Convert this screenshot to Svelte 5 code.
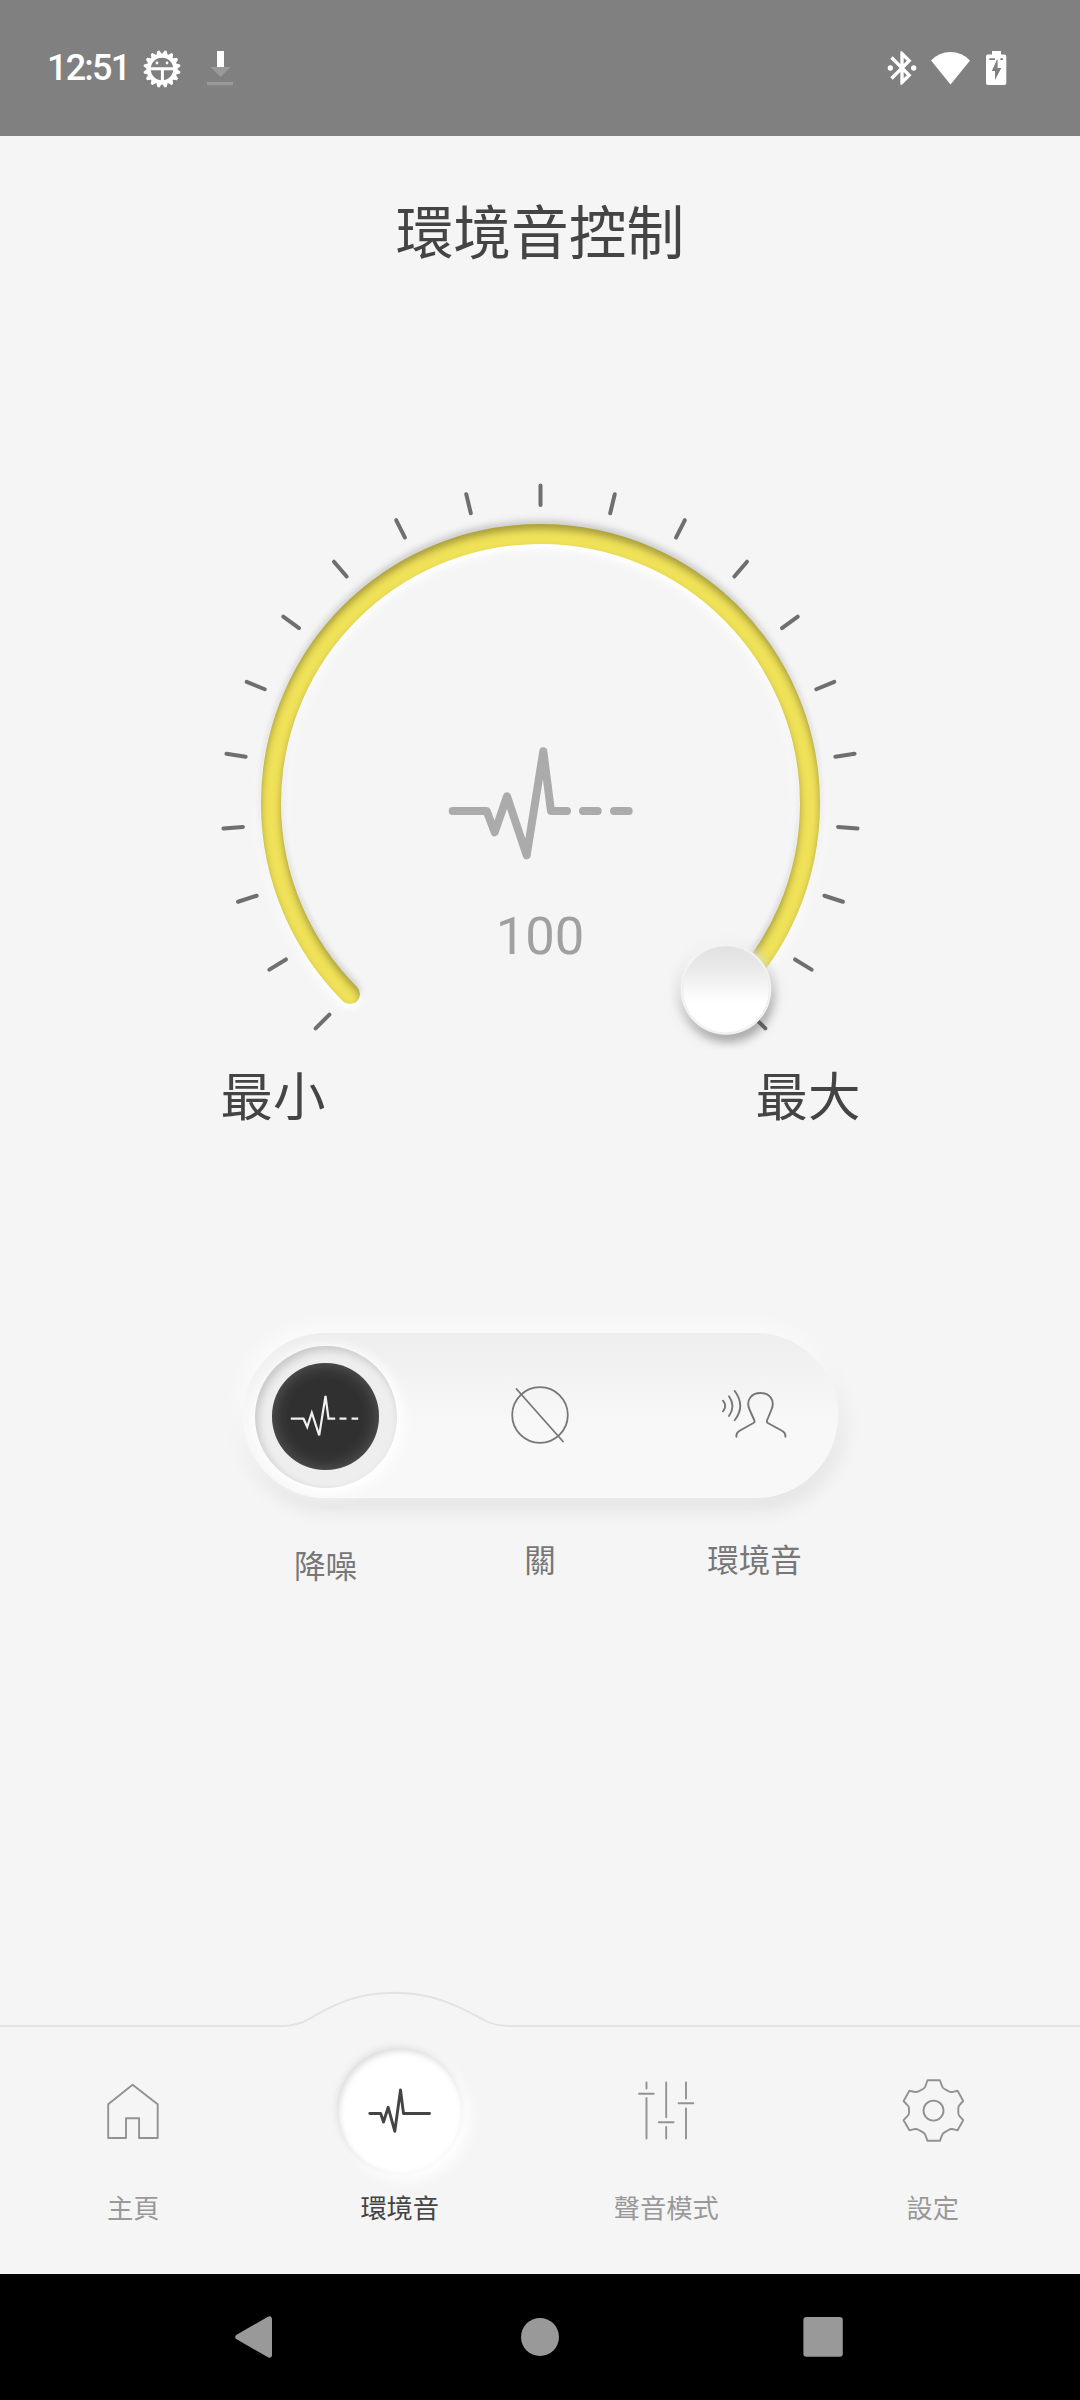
<script lang="ts">
	type Mode = 'nc' | 'off' | 'ambient';

	let level = $state(100);
	let mode = $state<Mode>('nc');
	let activeTab = $state('ambient');

	// Dial geometry
	const cx = 360.5;
	const cy = 353.5;
	const radius = 269.5;
	const knobRadius = 263;
	const sweep = 270;
	const tickCount = 21;

	const ticks = Array.from({ length: tickCount }, (_, i) => -sweep / 2 + (i * sweep) / (tickCount - 1));

	// 0 degrees points up, positive is clockwise
	function polar(angle: number, r: number) {
		const rad = (angle * Math.PI) / 180;
		return { x: cx + r * Math.sin(rad), y: cy - r * Math.cos(rad) };
	}

	let angle = $derived(-sweep / 2 + (level / 100) * sweep);
	let knob = $derived(polar(angle, knobRadius));
	let arc = $derived.by(() => {
		const from = polar(-sweep / 2, radius);
		const to = polar(angle, radius);
		const large = angle + sweep / 2 > 180 ? 1 : 0;
		return `M${from.x} ${from.y}A${radius} ${radius} 0 ${large} 1 ${to.x} ${to.y}`;
	});

	const modes: { id: Mode; label: string }[] = [
		{ id: 'nc', label: '降噪' },
		{ id: 'off', label: '關' },
		{ id: 'ambient', label: '環境音' }
	];

	const tabs = [
		{ id: 'home', label: '主頁' },
		{ id: 'ambient', label: '環境音' },
		{ id: 'sound', label: '聲音模式' },
		{ id: 'settings', label: '設定' }
	];

	const teeth = Array.from({ length: 16 }, (_, i) => (i * 360) / 16);
</script>

<div class="screen">
	<div class="status">
		<span class="clock">12:51</span>
		<svg class="bug" width="40" height="40" viewBox="-20 -20 40 40">
			{#each teeth as t}
				<path d="M-3.2 -14L-1 -18.6H1L3.2 -14Z" fill="#fff" transform="rotate({t + 11.25})" />
			{/each}
			<circle r="13.3" fill="none" stroke="#fff" stroke-width="4" />
			<path d="M-12 -0.3H12M0.4 0V12" stroke="#fff" stroke-width="3" />
			<circle cx="-5" cy="-6" r="1.4" fill="#fff" />
			<circle cx="5" cy="-6" r="1.4" fill="#fff" />
		</svg>
		<svg class="download" width="26" height="36" viewBox="0 0 26 36">
			<path d="M3.5 17H23.5L13.5 27ZM0 32H26V35.3H0Z" fill="#999" />
			<path d="M10 1H17V17H10Z" fill="#fff" />
		</svg>
		<svg class="bt" width="40" height="40" viewBox="0 0 24 24" fill="#fff">
			<path
				d="M17.71 7.71L12 2h-1v7.59L6.41 5 5 6.41 10.59 12 5 17.59 6.41 19 11 14.41V22h1l5.71-5.71-4.3-4.29zM13 5.83l1.88 1.88L13 9.59zM14.88 16.29L13 18.17v-3.76z"
			/>
			<circle cx="5" cy="12" r="1.6" />
			<circle cx="19" cy="12" r="1.6" />
		</svg>
		<svg class="wifi" width="40" height="34" viewBox="0 0 40 34">
			<path d="M0 9.6Q8 1 19.5 1T39 9.6L19.5 33.5Z" fill="#fff" />
		</svg>
		<svg class="battery" width="21" height="34" viewBox="0 0 21 34">
			<path d="M6 0H15V3.6H18.3A2 2 0 0 1 20.3 5.6V32A2 2 0 0 1 18.3 34H2A2 2 0 0 1 0 32V5.6A2 2 0 0 1 2 3.6H6Z" fill="#fff" />
			<path d="M3.3 7.2H9V9H3.3ZM14.3 7.2H17V9H14.3ZM11 8.5L5.8 20H9V29L15.3 17H11.6V8.5Z" fill="#808080" />
		</svg>
	</div>

	<h1>環境音控制</h1>

	<svg class="dial" width="720" height="600" viewBox="0 0 720 600">
		<defs>
			<filter id="groove" filterUnits="userSpaceOnUse" x="20" y="20" width="680" height="580" color-interpolation-filters="sRGB">
				<!-- white halo -->
				<feGaussianBlur in="SourceAlpha" stdDeviation="8" result="haloBlur" />
				<feOffset in="haloBlur" dy="3" result="haloOff" />
				<feFlood flood-color="#fff" flood-opacity="0.8" />
				<feComposite in2="haloOff" operator="in" result="halo" />
				<!-- soft shade above the stroke -->
				<feGaussianBlur in="SourceAlpha" stdDeviation="3" result="shadeBlur" />
				<feOffset in="shadeBlur" dy="-4" result="shadeOff" />
				<feFlood flood-color="#000" flood-opacity="0.18" />
				<feComposite in2="shadeOff" operator="in" result="shade" />
				<feGaussianBlur in="SourceAlpha" stdDeviation="2.5" result="lightBlur" />
				<feOffset in="lightBlur" dy="4" result="lightOff" />
				<feFlood flood-color="#fff" />
				<feComposite in2="lightOff" operator="in" result="light" />
				<!-- inner shadow -->
				<feGaussianBlur in="SourceAlpha" stdDeviation="3.5" result="innerBlur" />
				<feOffset in="innerBlur" dy="5" result="innerOff" />
				<feComposite in="SourceAlpha" in2="innerOff" operator="out" result="innerCut" />
				<feFlood flood-color="#000" flood-opacity="0.3" />
				<feComposite in2="innerCut" operator="in" result="inner" />
				<feMerge>
					<feMergeNode in="halo" />
					<feMergeNode in="shade" />
					<feMergeNode in="light" />
					<feMergeNode in="SourceGraphic" />
					<feMergeNode in="inner" />
				</feMerge>
			</filter>
			<filter id="knobShadow" x="-50%" y="-50%" width="200%" height="200%" color-interpolation-filters="sRGB">
				<feDropShadow dx="-2" dy="-5" stdDeviation="6" flood-color="#fff" flood-opacity="0.8" />
				<feDropShadow dx="2" dy="7" stdDeviation="5" flood-color="#000" flood-opacity="0.34" />
			</filter>
			<linearGradient id="knobFill" x1="0" y1="0" x2="0" y2="1">
				<stop offset="0" stop-color="#e1e1e1" />
				<stop offset="0.25" stop-color="#e9e9e9" />
				<stop offset="0.65" stop-color="#fff" />
			</linearGradient>
		</defs>

		<path d={arc} fill="none" stroke="#efe158" stroke-width="20" stroke-linecap="round" filter="url(#groove)" />
		{#each ticks as t}
			<line
				x1={cx}
				x2={cx}
				y1={cy - 318}
				y2={cy - 298.5}
				transform="rotate({t} {cx} {cy})"
				stroke="#6f6f6f"
				stroke-width="4"
				stroke-linecap="round"
			/>
		{/each}
		<g filter="url(#knobShadow)">
			<circle cx={knob.x - 0.5} cy={knob.y} r="45.3" fill="#f4f4f4" />
			<circle cx={knob.x - 0.5} cy={knob.y} r="43.5" fill="url(#knobFill)" stroke="#ededed" />
		</g>

		<path
			d="M272.7 361H306.7L314.7 382.3L327 346.3L346.7 405.3L363.3 301.3L371 361H387M403 361H417.7M434 361H448.7"
			fill="none"
			stroke="#ababab"
			stroke-width="8"
			stroke-linecap="round"
			stroke-linejoin="round"
		/>
		<text x="360" y="504" text-anchor="middle">{level}</text>
	</svg>

	<div class="range">
		<span>最小</span>
		<span>最大</span>
	</div>

	<div class="modes">
		{#each modes as m}
			<button class="mode" class:selected={mode === m.id} onclick={() => (mode = m.id)} aria-label={m.label}>
				<span class="disc">
					{#if m.id === 'nc'}
						<svg width="70" height="50" viewBox="0 0 70 50" stroke-width="2.2">
							<path d="M-0.2 26.7H12.5L16.2 35L20.8 20.7L28.2 43.3L34.5 4L37.5 26.7H44.2M48.5 26.7H55.5M60.5 26.7H67.2" />
						</svg>
					{:else if m.id === 'off'}
						<svg width="60" height="60" viewBox="-30 -30 60 60" stroke-width="1.8" stroke-linecap="round">
							<circle r="27.8" />
							<path d="M-23.5 -26L23 26.5" />
						</svg>
					{:else}
						<svg width="66" height="50" viewBox="0 0 66 50" stroke-width="1.9" stroke-linecap="round" stroke-linejoin="round">
							<path d="M1 10.7Q5.4 16 1 21.3M7 6.3Q14 16.2 7 26M12.7 1Q23.8 15.7 12.7 30.3" />
							<path d="M14.4 46.7V45.5Q14.4 42.5 18 40.5L31.5 33Q33 32.2 32.4 30.5L27.5 19.5C23.5 10 29.5 3 38.4 3S53.5 10 49.5 19.5L45 30.5Q44.4 32.2 45.8 33L59.5 40.5Q63.4 42.5 63.4 45.5V46.7" />
						</svg>
					{/if}
				</span>
			</button>
		{/each}
	</div>
	<div class="mode-labels">
		{#each modes as m}
			<span class:selected={mode === m.id}>{m.label}</span>
		{/each}
	</div>

	<nav>
		<svg class="curve" width="1080" height="40" viewBox="0 0 1080 40">
			<path
				d="M0 36H280C294 36 302 33.5 310 28.5C340 10.5 362 2.8 396 2.8C430 2.8 455 14 484 30C490 33.5 498 36 510 36H1080"
				fill="none"
				stroke="#e2e2e2"
				stroke-width="2"
			/>
		</svg>
		<div class="tabs">
			{#each tabs as tab}
				<button class="tab" class:active={activeTab === tab.id} onclick={() => (activeTab = tab.id)}>
					<span class="icon">
						<svg width="70" height="70" viewBox="-35 -35 70 70" fill="none" stroke-linecap="round" stroke-linejoin="round">
							{#if tab.id === 'home'}
								<path d="M-24.8 28V-5.7L-0.4 -25.3L24.7 -5.7V28H6.1V8.3H-7V28Z" />
							{:else if tab.id === 'ambient'}
								<path d="M-30.2 3.5H-19.3L-16.5 12L-11.8 -2.7L-5.2 21.3L0.5 -20L3.5 3.5H29.5" />
							{:else if tab.id === 'sound'}
								<path d="M-19.5 -27.5V-21.5M-19.5 -12V28.5M-27 -16.3H-12.3M0.2 -27.5V7.3M0.2 17V28.5M-7.2 12.3H7.6M20 -27.5V-11.5M20 -1.5V28.5M12.6 -6.7H27.3" />
							{:else}
								<circle cx="0.5" cy="0.6" r="10" />
								<path
									d="M-5.5 -29.8H6.9L9 -24Q9.5 -22 11.5 -21L15.5 -18.8Q17.5 -17.6 20 -18.2L24.6 -19.2L30.2 -9L27 -5.5Q25.3 -4 25.3 -1.5V2.8Q25.3 5.2 27 6.7L30.2 10.2L24.6 20.3L20 19.2Q17.5 18.7 15.5 20L11.5 22.4Q9.5 23.5 9 25.4L6.9 30.8H-5.5L-7.5 25.4Q-8 23.5 -10 22.4L-14 20Q-16.5 18.7 -19 19.2L-23.6 20.3L-29.4 10.2L-26.2 6.7Q-24 5.2 -24 2.8V-1.5Q-24 -4 -26.2 -5.5L-29.4 -9L-23.6 -19.2L-19 -18.2Q-16.5 -17.6 -14 -18.8L-10 -21Q-8 -22 -7.5 -24Z"
								/>
							{/if}
						</svg>
					</span>
					<span>{tab.label}</span>
				</button>
			{/each}
		</div>
	</nav>

	<div class="system">
		<svg width="43" height="44" viewBox="0 0 43 44">
			<path d="M4 22L35.3 4V40Z" fill="#999" stroke="#999" stroke-width="5.4" stroke-linejoin="round" />
		</svg>
		<svg width="40" height="40" viewBox="0 0 40 40"><circle cx="20" cy="20" r="19" fill="#999" /></svg>
		<svg width="40" height="40" viewBox="0 0 40 40"><rect x="0.4" y="0" width="39.4" height="39.7" rx="3" fill="#999" /></svg>
	</div>
</div>

<style>
	:global(body) {
		margin: 0;
		background: #f5f5f5;
	}

	.screen {
		display: flex;
		flex-direction: column;
		width: 1080px;
		height: 2400px;
		overflow: hidden;
		background: #f5f5f5;
		color: #444;
		font-family: Roboto, 'Noto Sans CJK TC', sans-serif;
	}

	svg {
		display: block;
		flex: none;
	}

	button {
		padding: 0;
		border: none;
		background: none;
		font: inherit;
		color: inherit;
		cursor: pointer;
	}

	.status {
		display: flex;
		align-items: center;
		box-sizing: border-box;
		height: 136px;
		padding: 0 73px 0 47px;
		background: #808080;
		color: #fff;
	}

	.clock {
		width: 95px;
		font-size: 36px;
		font-weight: 500;
		letter-spacing: -1.8px;
	}

	.bug {
		margin-top: 2px;
	}

	.download {
		margin-left: 25px;
	}

	.bt {
		margin-left: auto;
	}

	.wifi {
		margin-left: 9.5px;
	}

	.battery {
		margin-left: 15px;
	}

	h1 {
		margin: 0;
		height: 186px;
		font-family: 'Noto Sans CJK TC', sans-serif;
		font-size: 57.75px;
		font-weight: 400;
		line-height: 186px;
		text-align: center;
	}

	.dial {
		margin: 128px auto 0;
	}

	.dial text {
		font-size: 52.5px;
		fill: #a0a0a0;
	}

	.range {
		display: flex;
		justify-content: space-between;
		margin-top: 13px;
		padding: 0 219.5px 0 220.5px;
		font-family: 'Noto Sans CJK TC', sans-serif;
		font-size: 52.5px;
		line-height: 60px;
	}

	.modes {
		display: flex;
		align-items: center;
		justify-content: space-between;
		box-sizing: border-box;
		width: 595px;
		height: 165px;
		margin: 209.5px auto 0;
		padding: 0 12px;
		border-radius: 83px;
		background: linear-gradient(#eee, #f3f3f3 28%, #f8f8f8 55%);
		box-shadow:
			-3px -6px 20px rgba(255, 255, 255, 0.85),
			3px 10px 22px rgba(0, 0, 0, 0.09);
	}

	.mode {
		display: flex;
		align-items: center;
		justify-content: center;
		width: 142px;
		height: 142px;
		border-radius: 50%;
	}

	.mode.selected {
		margin-top: 3px;
		background: #eee;
		box-shadow:
			5px 5px 16px #fff,
			0 0 14px rgba(255, 255, 255, 0.9),
			inset 3px 4px 9px rgba(0, 0, 0, 0.17);
	}

	.disc {
		display: flex;
		align-items: center;
		justify-content: center;
		width: 106.5px;
		height: 106.5px;
		border-radius: 50%;
	}

	.disc svg {
		fill: none;
		stroke: #777;
		overflow: visible;
	}

	.selected .disc {
		background: #303030;
		box-shadow: inset 0 0 18px rgba(255, 255, 255, 0.22);
	}

	.selected .disc svg {
		stroke: #f0f0f0;
	}

	.mode-labels {
		display: flex;
		justify-content: space-between;
		width: 571px;
		margin: 42px auto 0;
		font-family: 'Noto Sans CJK TC', sans-serif;
		font-size: 31.5px;
		line-height: 36px;
		color: #777;
	}

	.mode-labels span {
		width: 142px;
		text-align: center;
	}

	.mode-labels .selected {
		margin-top: 6px;
	}

	nav {
		height: 284px;
		margin-top: auto;
	}

	.tabs {
		display: grid;
		grid-template-columns: repeat(4, 1fr);
		margin-top: 17.5px;
		padding-right: 14px;
	}

	.tab {
		display: flex;
		flex-direction: column;
		align-items: center;
		gap: 16px;
		font-family: 'Noto Sans CJK TC', sans-serif;
		font-size: 26.25px;
		line-height: 36px;
		color: #999;
	}

	.icon {
		display: flex;
		align-items: center;
		justify-content: center;
		width: 125px;
		height: 125px;
		border-radius: 50%;
	}

	.icon svg {
		stroke: #929292;
		stroke-width: 1.9;
	}

	.active {
		color: #444;
	}

	.active .icon {
		background: #fff;
		box-shadow:
			-1px -2px 7px rgba(0, 0, 0, 0.08),
			7px 7px 14px #fff,
			inset 2px 3px 6px rgba(0, 0, 0, 0.14);
	}

	.active .icon svg {
		stroke: #444;
		stroke-width: 2.9;
	}

	.system {
		display: flex;
		align-items: center;
		gap: 243px;
		height: 126px;
		padding-left: 234px;
		background: #000;
	}
</style>
